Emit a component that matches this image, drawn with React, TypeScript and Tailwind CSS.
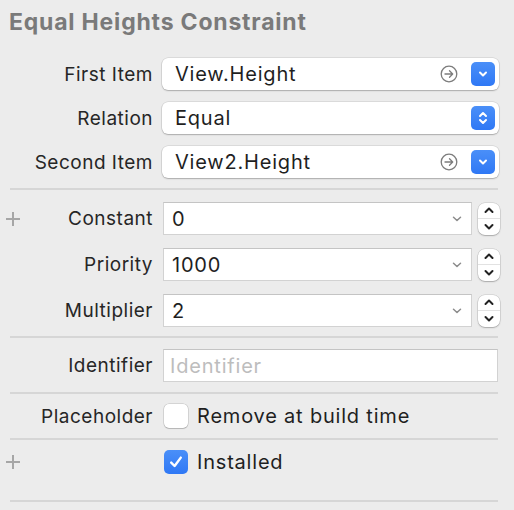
import React from 'react'

const font = { fontFamily: 'Inter, "Noto Sans", sans-serif' }

function Plus() {
  return (
    <svg width="14" height="14" viewBox="0 0 14 14" className="block">
      <path d="M7 0v14M0 7h14" stroke="#a6a6a6" strokeWidth="2" />
    </svg>
  )
}

function Label({ text, plus }: { text: string; plus?: boolean }) {
  return (
    <div className="w-[153px] shrink-0 flex items-center justify-between pl-[6px]">
      <div className="w-[14px]">{plus && <Plus />}</div>
      <span className="text-[19px] tracking-[0.5px] text-[#262626] leading-none">{text}</span>
    </div>
  )
}

function GoIcon() {
  return (
    <svg width="18" height="18" viewBox="0 0 18 18">
      <circle cx="9" cy="9" r="7.8" fill="none" stroke="#7c7c7c" strokeWidth="1.3" />
      <path d="M5 9h7.5M9.5 5.8 12.7 9 9.5 12.2" fill="none" stroke="#7c7c7c" strokeWidth="1.3" strokeLinecap="round" strokeLinejoin="round" />
    </svg>
  )
}

function BlueButton({ double }: { double?: boolean }) {
  return (
    <div className="w-[24px] h-[24px] rounded-[5px] bg-gradient-to-b from-[#4a8ff8] to-[#2f78f5] flex items-center justify-center">
      {double ? (
        <svg width="12" height="16" viewBox="0 0 12 16">
          <path d="M3 6 6 3l3 3M3 10l3 3 3-3" fill="none" stroke="#fff" strokeWidth="2" strokeLinecap="round" strokeLinejoin="round" />
        </svg>
      ) : (
        <svg width="12" height="12" viewBox="0 0 12 12">
          <path d="M3 4.5 6 7.5l3-3" fill="none" stroke="#fff" strokeWidth="2" strokeLinecap="round" strokeLinejoin="round" />
        </svg>
      )}
    </div>
  )
}

function Popup({ value, go, double }: { value: string; go?: boolean; double?: boolean }) {
  return (
    <div className="ml-[9px] w-[337px] h-[32px] bg-white rounded-[6px] shadow-[0_0_0_0.5px_rgba(0,0,0,0.14),0_1px_1.5px_rgba(0,0,0,0.22)] flex items-center pl-[13px] pr-[4px]">
      <span className="flex-1 text-[20px] tracking-[0.8px] text-[#1f1f1f] leading-none">{value}</span>
      {go && <div className="mr-[13px]"><GoIcon /></div>}
      <BlueButton double={double} />
    </div>
  )
}

function Stepper() {
  return (
    <div className="ml-[6px] w-[22px] h-[32px] bg-white rounded-[7px] shadow-[0_0_0_0.5px_rgba(0,0,0,0.16),0_1px_1.5px_rgba(0,0,0,0.22)] flex flex-col">
      <div className="flex-1 flex items-center justify-center border-b border-[#e2e2e2]">
        <svg width="12" height="8" viewBox="0 0 12 8">
          <path d="M2.5 6 6 2.5 9.5 6" fill="none" stroke="#222" strokeWidth="2" strokeLinecap="round" strokeLinejoin="round" />
        </svg>
      </div>
      <div className="flex-1 flex items-center justify-center">
        <svg width="12" height="8" viewBox="0 0 12 8">
          <path d="M2.5 2 6 5.5 9.5 2" fill="none" stroke="#222" strokeWidth="2" strokeLinecap="round" strokeLinejoin="round" />
        </svg>
      </div>
    </div>
  )
}

function Combo({ value }: { value: string }) {
  return (
    <div className="flex items-center">
      <div className="ml-[10px] w-[309px] h-[33px] bg-white border border-[#d2d2d2] border-t-[#c4c4c4] flex items-center pl-[8px] pr-[9px]">
        <span className="flex-1 text-[20px] tracking-[0.8px] text-[#1f1f1f] leading-none">{value}</span>
        <svg width="10" height="6" viewBox="0 0 10 6">
          <path d="M1.5 1.2 5 4.5l3.5-3.3" fill="none" stroke="#8c8c8c" strokeWidth="1.5" strokeLinecap="round" strokeLinejoin="round" />
        </svg>
      </div>
      <Stepper />
    </div>
  )
}

function Sep() {
  return <div className="ml-[10px] w-[488px] h-[2px] bg-[#d6d6d6]" />
}

function Checkbox({ checked }: { checked?: boolean }) {
  return checked ? (
    <div className="w-[24px] h-[24px] rounded-[5px] bg-gradient-to-b from-[#4a8ff8] to-[#2f78f5] flex items-center justify-center">
      <svg width="16" height="16" viewBox="0 0 16 16">
        <path d="M3.2 8.6 6.6 12 12.8 3.6" fill="none" stroke="#fff" strokeWidth="2.4" strokeLinecap="round" strokeLinejoin="round" />
      </svg>
    </div>
  ) : (
    <div className="w-[24px] h-[24px] rounded-[5px] bg-white shadow-[0_0_0_0.5px_rgba(0,0,0,0.2),0_1px_1px_rgba(0,0,0,0.15)]" />
  )
}

export default function App() {
  return (
    <div className="w-[514px] h-[510px] bg-[#ececec] overflow-hidden" style={font}>
      <div className="h-[58px] pl-[9px] pt-[8px]">
        <h1 className="text-[23px] tracking-[0.8px] font-bold text-[#7a7a7a] leading-[28px]">Equal Heights Constraint</h1>
      </div>

      <div className="flex flex-col gap-[12px]">
        <div className="flex items-center">
          <Label text="First Item" />
          <Popup value="View.Height" go />
        </div>
        <div className="flex items-center">
          <Label text="Relation" />
          <Popup value="Equal" double />
        </div>
        <div className="flex items-center">
          <Label text="Second Item" />
          <Popup value="View2.Height" go />
        </div>
      </div>

      <div className="mt-[10px]"><Sep /></div>

      <div className="mt-[12px] flex flex-col gap-[13px]">
        <div className="flex items-center">
          <Label text="Constant" plus />
          <Combo value="0" />
        </div>
        <div className="flex items-center">
          <Label text="Priority" />
          <Combo value="1000" />
        </div>
        <div className="flex items-center">
          <Label text="Multiplier" />
          <Combo value="2" />
        </div>
      </div>

      <div className="mt-[9px]"><Sep /></div>

      <div className="mt-[11px] flex items-center">
        <Label text="Identifier" />
        <div className="ml-[10px] w-[335px] h-[33px] bg-white border border-[#d2d2d2] border-t-[#c4c4c4] flex items-center pl-[6px]">
          <span className="text-[20px] tracking-[0.8px] text-[#bdbdbd] leading-none">Identifier</span>
        </div>
      </div>

      <div className="mt-[10px]"><Sep /></div>

      <div className="mt-[10px] flex items-center h-[24px]">
        <Label text="Placeholder" />
        <div className="ml-[11px] flex items-center gap-[9px]">
          <Checkbox />
          <span className="text-[20px] tracking-[0.8px] text-[#1f1f1f] leading-none">Remove at build time</span>
        </div>
      </div>

      <div className="mt-[10px]"><Sep /></div>

      <div className="mt-[10px] flex items-center h-[24px]">
        <Label text="" plus />
        <div className="ml-[11px] flex items-center gap-[9px]">
          <Checkbox checked />
          <span className="text-[20px] tracking-[0.8px] text-[#1f1f1f] leading-none">Installed</span>
        </div>
      </div>

      <div className="mt-[26px]"><Sep /></div>
    </div>
  )
}
